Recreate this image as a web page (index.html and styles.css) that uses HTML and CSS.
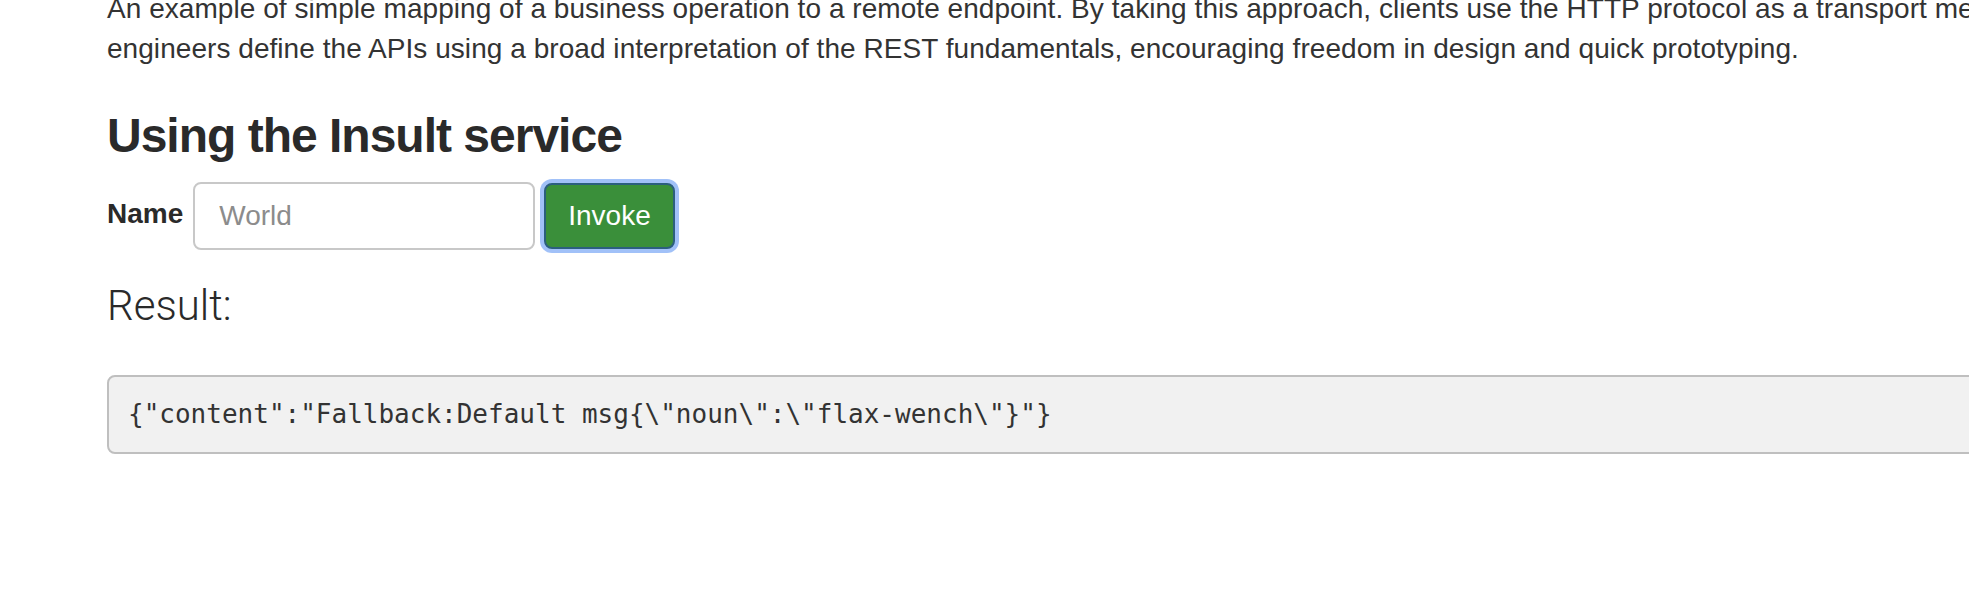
FILE: index.html
```html
<!DOCTYPE html>
<html lang="en">
<head>
<meta charset="utf-8">
<title>Using the Insult service</title>
<link rel="stylesheet" href="styles.css">
</head>
<body>
<main class="page">
  <p class="intro">An example of simple mapping of a business operation to a remote endpoint. By taking this approach, clients use the HTTP protocol as a transport mechanism to call services. REST<br>engineers define the APIs using a broad interpretation of the REST fundamentals, encouraging freedom in design and quick prototyping.</p>

  <h3 class="title">Using the Insult service</h3>

  <form class="invoke-form">
    <label class="field-label" for="name">Name</label>
    <input class="field-input" id="name" type="text" placeholder="World">
    <button class="btn-invoke" type="button">Invoke</button>
  </form>

  <p class="lead">Result:</p>

  <pre class="result">{"content":"Fallback:Default msg{\"noun\":\"flax-wench\"}"}</pre>
</main>
</body>
</html>
```

FILE: styles.css
```css
html, body {
  margin: 0;
  padding: 0;
  overflow: hidden;
  background: #ffffff;
}

body {
  font-family: "Liberation Sans", Arial, sans-serif;
  font-size: 28px;
  line-height: 40px;
  color: #333333;
}

.page {
  width: 2400px;
  padding-left: 107px;
  margin-top: -11px;
  box-sizing: border-box;
}

.intro {
  margin: 0 0 20px 0;
  white-space: nowrap;
  letter-spacing: 0.05px;
}

.title {
  margin: 40px 0 20px 0;
  font-size: 48px;
  line-height: 53px;
  font-weight: 700;
  letter-spacing: -1px;
  color: #2a2a2a;
}

.invoke-form {
  display: flex;
  align-items: center;
  margin: 0;
}

.field-label {
  font-weight: 700;
  font-size: 28px;
  line-height: 40px;
  padding-bottom: 4px;
  margin-right: 10px;
  color: #2a2a2a;
}

.field-input {
  box-sizing: border-box;
  width: 342px;
  height: 68px;
  padding: 12px 24px;
  border: 2px solid #c8c8c8;
  border-radius: 8px;
  font-family: "Liberation Sans", Arial, sans-serif;
  font-size: 28px;
  line-height: 40px;
  color: #555555;
  background: #ffffff;
  outline: none;
}

.field-input::placeholder {
  color: #8c8c8c;
}

.btn-invoke {
  box-sizing: border-box;
  margin-left: 9px;
  height: 66px;
  padding: 0 22px;
  border: 2px solid #2c5f7e;
  border-radius: 8px;
  background: #3a8f3a;
  color: #ffffff;
  font-family: "Liberation Sans", Arial, sans-serif;
  font-size: 28px;
  line-height: 40px;
  box-shadow: 0 0 0 4px rgba(110, 160, 245, 0.65);
}

.lead {
  margin: 26px 0 0 0;
  font-family: "Roboto", "Liberation Sans", sans-serif;
  font-weight: 300;
  font-size: 42px;
  line-height: 59px;
  color: #2a2a2a;
}

.result {
  margin: 40px 0 0 0;
  padding: 19px;
  border: 2px solid #bfbfbf;
  border-radius: 8px;
  background: #f1f1f1;
  font-family: "DejaVu Sans Mono", "Liberation Mono", monospace;
  font-size: 26px;
  line-height: 37px;
  color: #333333;
  white-space: pre;
}
```
